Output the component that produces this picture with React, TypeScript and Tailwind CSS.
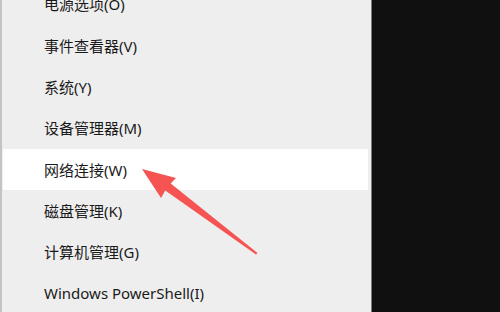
import React from "react";

const items = [
  "电源选项(O)",
  "事件查看器(V)",
  "系统(Y)",
  "设备管理器(M)",
  "网络连接(W)",
  "磁盘管理(K)",
  "计算机管理(G)",
  "Windows PowerShell(I)",
];

export default function App() {
  return (
    <div
      className="relative w-[500px] h-[312px] overflow-hidden bg-[#101010] flex"
      style={{ fontFamily: '"Noto Sans", "Noto Sans CJK SC", sans-serif' }}
    >
      <div className="w-[371px] h-full shrink-0 bg-[#eeeeee] border-l-2 border-[#c4c4c4] pl-px pr-[3px] overflow-hidden">
        <div className="flex flex-col -mt-[16px]">
          {items.map((t, i) => (
            <div
              key={t}
              className={`h-[41.3px] shrink-0 flex items-center pl-[41px] text-[15px] text-[#1a1a1a] ${
                i === 4 ? "bg-white" : ""
              }`}
            >
              {t}
            </div>
          ))}
        </div>
      </div>
      <div className="w-px h-full shrink-0 bg-[#7a7a7a]" />
      <svg className="absolute left-0 top-0" width="500" height="312" viewBox="0 0 500 312">
        <polygon
          points="142,169 176,178 170.7,183.4 257.5,253 256,254.5 165.3,190.6 161,198"
          fill="#f65353"
        />
      </svg>
    </div>
  );
}
